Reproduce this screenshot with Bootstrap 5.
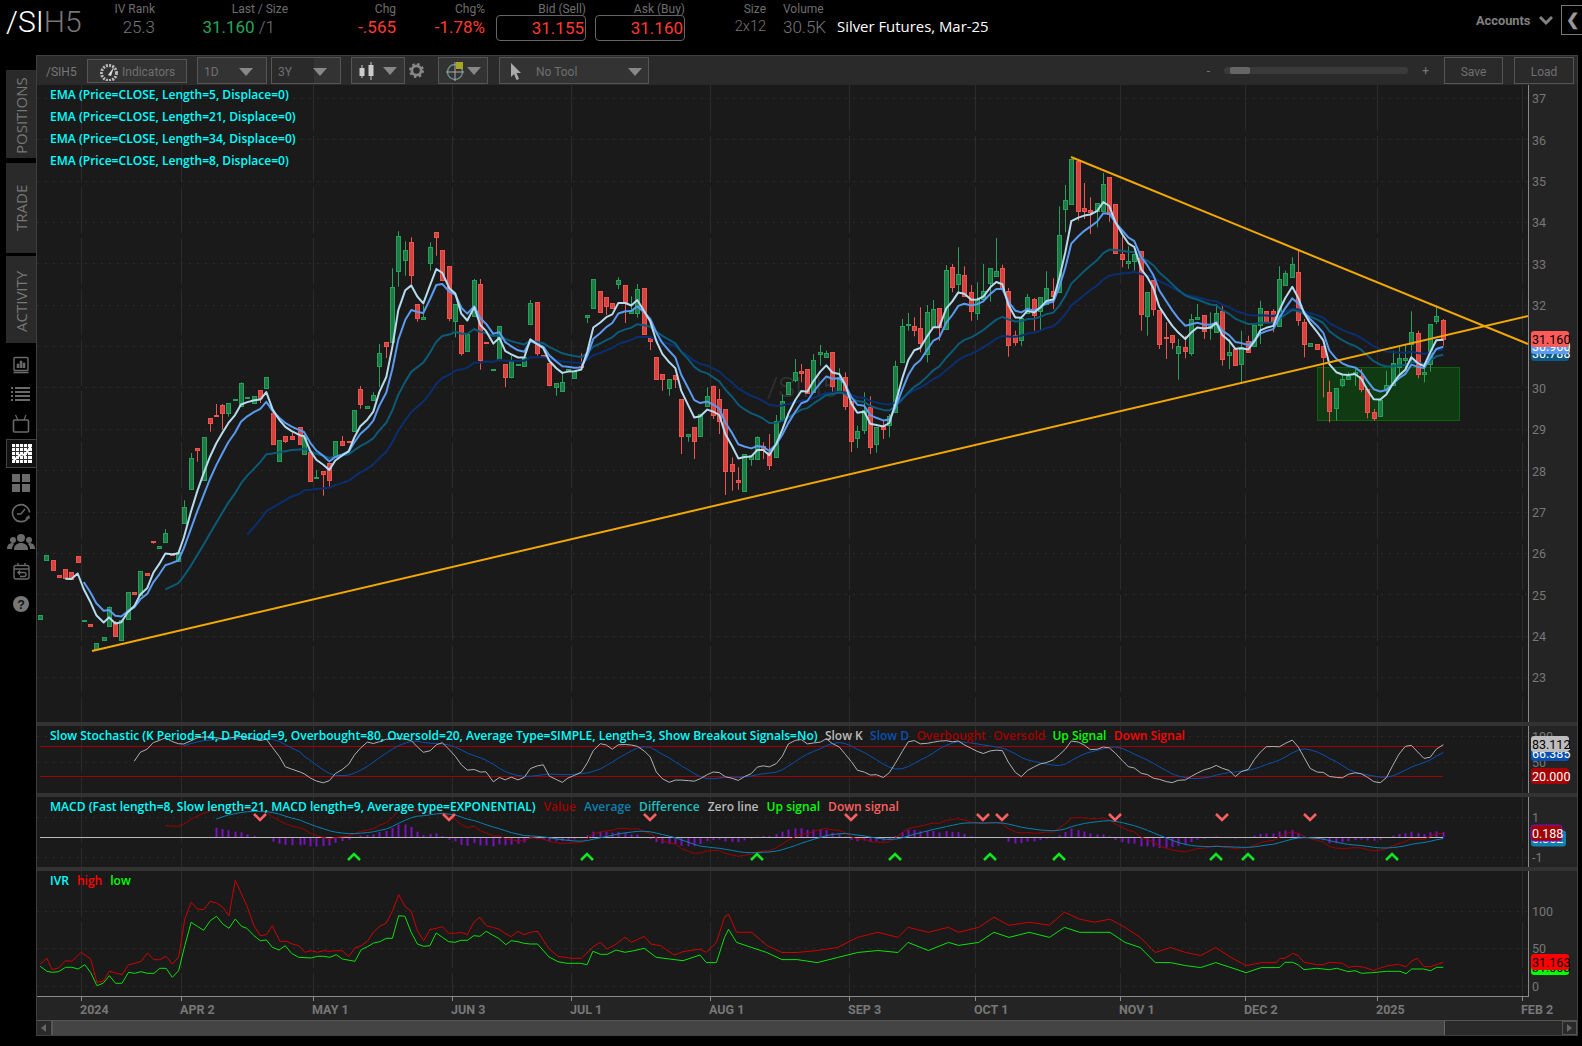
<!doctype html>
<html lang="en">
<head>
<meta charset="utf-8">
<title>/SIH5 chart</title>
<link href="https://cdn.jsdelivr.net/npm/bootstrap@5.3.0/dist/css/bootstrap.min.css" rel="stylesheet">
<style>
html,body{height:1046px;overflow:hidden;background:#000;}
body{font-family:Roboto,"Liberation Sans",sans-serif;color:#777;font-size:12px;}
.hdr{height:55px;padding:3px 0 0 6px;}
.sym{width:84px;font-size:30px;font-weight:300;line-height:38px;color:#777;}
.sym b{font-weight:300;color:#fff;}
.qc{display:flex;flex-direction:column;text-align:right;flex:none;}
.ql{font-size:12px;line-height:12px;color:#6e6e6e;}
.qv{font-size:17px;font-weight:300;line-height:24px;color:#777;}
.qv.nar{font-size:14.5px;}
.qbox{border:1px solid #666;border-radius:4px;margin-left:auto;padding-right:1px;width:90px;color:#ff3b30;font-weight:400;}
.c-iv{width:65px}.c-last{width:133px}.c-chg{width:108px}.c-pct{width:89px}.c-bid{width:101px}.c-ask{width:99px}.c-sz{width:81px}.c-vol{width:47px;margin-left:17px;text-align:left}
.red{color:#ff3b30;font-weight:400}.grn{color:#22a858;font-weight:400}
.pr-s{padding-right:13px;}
.desc{font-family:"Open Sans",sans-serif;font-size:14.9px;color:#fff;margin:11px 0 0 7px;line-height:24px;}
.acct{margin-left:auto;margin-right:-4px;margin-top:10px;font-weight:700;font-size:12.8px;color:#808080;line-height:16px;width:89px;}
.acct svg{margin-left:9px;vertical-align:-1px;}
.coll{width:21px;height:30px;margin-top:2px;border:1px solid #777;border-right:0;color:#999;font-weight:700;line-height:27px;padding-left:4px;font-size:16px;}
.work{height:981px;}
.rail{width:36px;flex:none;padding:15px 0 0 6px;}
.rtab{writing-mode:vertical-rl;transform:rotate(180deg);background:#2a2a2a;color:#777;font-family:"Open Sans",sans-serif;font-size:15px;text-align:center;width:30px;line-height:30px;box-sizing:border-box;padding-bottom:4px;}
.rt1{height:88px;margin-bottom:5px}.rt2{height:90px;margin-bottom:3px;padding-bottom:0}.rt3{height:87px;margin-bottom:7px}
.ric{height:29.6px;width:30px;display:flex;align-items:center;justify-content:center;}
.ric.act{border:1px solid #444;border-right:0;background:#111;}
.ric.last{margin-top:2px;}
.panel{width:1542px;flex:none;border:1px solid #3f3f3f;background:#1a1a1a;}
.tbar{height:30px;background:#2a2a2a;align-items:center;}
.tsym{width:50px;padding:2px 0 0 9px;color:#777;}
.tbtn{height:27px;border:1px solid #555;background:#333;color:#6f6f6f;display:flex;align-items:center;flex:none;padding-top:2px;}
.t-ind{width:100px;height:24px;padding-left:11px;}
.t-ind svg{margin-right:3px;}
.t-1d{width:70px;margin-left:10px;padding:2px 13px 0 6px;justify-content:space-between;}
.t-3y{width:70px;margin-left:4px;padding:2px 13px 0 6px;justify-content:space-between;background:linear-gradient(90deg,#2a2a2a 42px,#333 42px);}
.t-cd{width:54px;margin-left:10px;padding:0 7px 0 6px;justify-content:space-between;}
.t-gr{width:50px;margin-left:11px;padding:0 6px 0 6px;justify-content:space-between;}
.t-no{width:150px;margin-left:11px;padding:2px 6px 0 10px;}
.t-no span{margin:0 auto 0 14px;}
.tri{width:0;height:0;border:7px solid transparent;border-top:8px solid #888;border-bottom:0;flex:none;}
.tgear{width:22px;display:flex;flex:none;justify-content:center;}
.zm{margin-left:auto;color:#777;}
.slid{width:184px;height:7px;background:#3a3a3a;border-radius:4px;margin:0 14px;padding-left:6px;}
.slid i{display:block;width:20px;height:7px;background:#666;border-radius:2px;}
.t-sv{width:59px;margin-left:15px;justify-content:center;background:#2a2a2a;}
.t-ld{width:60px;margin:0 3px 0 11px;justify-content:center;background:#2a2a2a;}
.pane{position:relative;}
.pane svg{display:block;}
.divd{height:4px;background:#333;}
.lg{position:absolute;left:13px;top:2px;font-family:"Open Sans",sans-serif;font-size:12.05px;font-weight:600;line-height:16px;white-space:nowrap;color:#0ff;}
.lg span{margin-left:8px;}
.lg.l2{top:24px}.lg.l3{top:46px}.lg.l4{top:68px}
.lg.lsto{letter-spacing:-.03px;}
.lg.lsto span{margin-left:7.4px;}
.c-k{color:#bbb}.c-d{color:#0a50b0}.c-o{color:#a00000}.c-u{color:#0f0}.c-n{color:#f00}.c-a{color:#0a80b0}.c-f{color:#20c0c0}.c-s{color:#ff6060}
.sbar{height:15px;background:#2a2a2a;border-top:1px solid #555;}
.sb-l{width:16px;border-right:2px solid #555;color:#777;}
.sb-t{width:1392px;background:#444;border-right:1px solid #666;}
.sb-r{width:15px;margin-left:auto;border:1px solid #555;}
.sb-l,.sb-r{display:flex;align-items:center;justify-content:center;}
.qtx{fill:#777;font-family:Roboto,sans-serif;font-size:12.5px;}
</style>
</head>
<body>
<header class="hdr d-flex align-items-start">
  <div class="sym"><b>/SI</b><span>H5</span></div>
  <div class="qc c-iv"><div class="ql">IV Rank</div><div class="qv">25.3</div></div>
  <div class="qc c-last"><div class="ql">Last / Size</div><div class="qv pr-s"><span class="grn">31.160</span> /1</div></div>
  <div class="qc c-chg"><div class="ql">Chg</div><div class="qv red">-.565</div></div>
  <div class="qc c-pct"><div class="ql">Chg%</div><div class="qv red">-1.78%</div></div>
  <div class="qc c-bid"><div class="ql">Bid (Sell)</div><div class="qv qbox">31.155</div></div>
  <div class="qc c-ask"><div class="ql">Ask (Buy)</div><div class="qv qbox">31.160</div></div>
  <div class="qc c-sz"><div class="ql">Size</div><div class="qv nar">2x12</div></div>
  <div class="qc c-vol"><div class="ql">Volume</div><div class="qv">30.5K</div></div>
  <div class="desc">Silver Futures, Mar-25</div>
  <div class="acct">Accounts<svg width="14" height="10" viewBox="0 0 14 10"><path d="M1 1l6 6 6-6" fill="none" stroke="#808080" stroke-width="3"/></svg></div>
  <div class="coll">&#10094;</div>
</header>
<div class="work d-flex">
  <nav class="rail">
    <div class="rtab rt1">POSITIONS</div>
    <div class="rtab rt2">TRADE</div>
    <div class="rtab rt3">ACTIVITY</div>
    <div class="ric"><svg width="18" height="18" viewBox="0 0 18 18" fill="none" stroke="#6a6a6a"><rect x="2" y="1.5" width="14" height="13" rx="1" stroke-width="1.4"/><path d="M1.5 16.5h15" stroke-width="1.6"/><path d="M5 12V8h2v4M8 12V5h2v7M11 12V7h2v5" fill="#6a6a6a" stroke-width=".6"/></svg></div>
    <div class="ric"><svg width="20" height="16" viewBox="0 0 20 16" stroke="#6a6a6a" stroke-width="2"><path d="M0 2h2M4 2h15M0 6h2M4 6h15M0 10h2M4 10h15M0 14h2M4 14h15"/></svg></div>
    <div class="ric"><svg width="18" height="19" viewBox="0 0 18 19" fill="none" stroke="#6a6a6a" stroke-width="1.6"><rect x="1.5" y="6" width="15" height="12" rx="1"/><path d="M6 6L3.5 1M12 6l2-5" stroke-width="1.2"/></svg></div>
    <div class="ric act"><svg width="20" height="19" viewBox="0 0 20 19"><rect width="20" height="19" fill="#fff"/><path d="M3.5 0v19M7.5 0v19M11.5 0v19M15.5 0v19M0 3.5h20M0 7.5h20M0 11.5h20M0 15.5h20" stroke="#333" stroke-width="1"/><path d="M1 17L9 10l4 1 6-9" stroke="#fff" stroke-width="2" fill="none"/></svg></div>
    <div class="ric"><svg width="18" height="18" viewBox="0 0 18 18" fill="#6a6a6a"><rect width="8" height="8"/><rect x="10" width="8" height="8"/><rect y="10" width="8" height="8"/><rect x="10" y="10" width="8" height="8"/></svg></div>
    <div class="ric"><svg width="20" height="20" viewBox="0 0 20 20" fill="none" stroke="#6a6a6a" stroke-width="1.6"><path d="M17 15A8.5 8.5 0 1 1 18.5 9.5"/><path d="M10 11l4-5M10 11H6" stroke-width="1.4"/><path d="M14 15.500h5l-1-3.500z" fill="#6a6a6a" stroke="none"/></svg></div>
    <div class="ric"><svg width="28" height="16" viewBox="0 0 28 16" fill="#6a6a6a"><circle cx="14" cy="4" r="4"/><path d="M7 16c0-5 3-7 7-7s7 2 7 7z"/><circle cx="6" cy="6" r="3"/><path d="M0 15c0-4 2-6 6-6l1 1c-1 1-2 3-2 5z"/><circle cx="22" cy="6" r="3"/><path d="M28 15c0-4-2-6-6-6l-1 1c1 1 2 3 2 5z"/></svg></div>
    <div class="ric"><svg width="17" height="17" viewBox="0 0 17 17" fill="none" stroke="#6a6a6a" stroke-width="1.4"><rect x="1" y="2.500" width="15" height="13.500" rx="2"/><path d="M1 6h15M5 0v3M12 0v3"/><path d="M5 9.500h6a2 2 0 0 1 0 4H7M7 7.500l-2 2 2 2"/></svg></div>
    <div class="ric last"><svg width="16" height="16" viewBox="0 0 16 16"><circle cx="8" cy="8" r="8" fill="#777"/><text x="8" y="12.500" text-anchor="middle" font-family="Liberation Sans,sans-serif" font-size="12.500" font-weight="700" fill="#111">?</text></svg></div>
  </nav>
  <main class="panel d-flex flex-column">
    <div class="tbar d-flex">
      <div class="tsym">/SIH5</div>
      <div class="tbtn t-ind"><svg width="20" height="18" viewBox="0 0 20 18"><circle cx="10" cy="10" r="7.500" fill="none" stroke="#bbb" stroke-width="3" stroke-dasharray="2 1.200"/><path d="M9 12L15 4l-3 9z" fill="#ddd"/></svg>Indicators</div>
      <div class="tbtn t-1d"><span>1D</span><i class="tri"></i></div>
      <div class="tbtn t-3y"><span>3Y</span><i class="tri"></i></div>
      <div class="tbtn t-cd"><svg width="18" height="18" viewBox="0 0 18 18"><path d="M4 3v13M13 0v18" stroke="#ccc"/><rect x="1.500" y="6" width="5" height="8" fill="#ccc"/><rect x="10.500" y="3" width="5" height="11" fill="#ccc"/></svg><i class="tri"></i></div>
      <div class="tgear"><svg width="15" height="15" viewBox="0 0 16 16"><circle cx="8" cy="8" r="5" fill="none" stroke="#888" stroke-width="3"/><circle cx="8" cy="8" r="6.800" fill="none" stroke="#888" stroke-width="2.400" stroke-dasharray="2.500 2.840"/></svg></div>
      <div class="tbtn t-gr"><svg width="20" height="20" viewBox="0 0 20 20"><circle cx="10" cy="11" r="7.500" fill="none" stroke="#6a8a8a" stroke-width="1.500"/><path d="M10 1v19M1 11h18" stroke="#aaa"/><rect x="11" y="1" width="7" height="7" fill="#a8a820"/></svg><i class="tri"></i></div>
      <div class="tbtn t-no"><svg width="12" height="17" viewBox="0 0 12 17"><path d="M1 0l10 10H6.500l2.500 6-2.500 1-2.500-6L1 14z" fill="#aaa"/></svg><span>No Tool</span><i class="tri"></i></div>
      <div class="zm">-</div>
      <div class="slid"><i></i></div>
      <div>+</div>
      <div class="tbtn t-sv">Save</div>
      <div class="tbtn t-ld">Load</div>
    </div>
    <div class="pane" id="pMain">
      <div class="lg">EMA (Price=CLOSE, Length=5, Displace=0)</div>
      <div class="lg l2">EMA (Price=CLOSE, Length=21, Displace=0)</div>
      <div class="lg l3">EMA (Price=CLOSE, Length=34, Displace=0)</div>
      <div class="lg l4">EMA (Price=CLOSE, Length=8, Displace=0)</div>
    </div>
    <div class="divd"></div>
    <div class="pane" id="pSto">
      <div class="lg lsto">Slow Stochastic (K Period=14, D Period=9, Overbought=80, Oversold=20, Average Type=SIMPLE, Length=3, Show Breakout Signals=No)<span class="c-k">Slow K</span><span class="c-d">Slow D</span><span class="c-o">Overbought</span><span class="c-o">Oversold</span><span class="c-u">Up Signal</span><span class="c-n">Down Signal</span></div>
    </div>
    <div class="divd"></div>
    <div class="pane" id="pMac">
      <div class="lg">MACD (Fast length=8, Slow length=21, MACD length=9, Average type=EXPONENTIAL)<span class="c-o">Value</span><span class="c-a">Average</span><span class="c-f">Difference</span><span class="c-k">Zero line</span><span class="c-u">Up signal</span><span class="c-s">Down signal</span></div>
    </div>
    <div class="divd"></div>
    <div class="pane" id="pIvr">
      <div class="lg">IVR<span class="c-n">high</span><span class="c-u">low</span></div>
    </div>
    <div class="pane" id="pTime"></div>
    <div class="sbar d-flex">
      <div class="sb-l"><svg width="6" height="8" viewBox="0 0 6 8"><path d="M5 0v8L0 4z" fill="#666"/></svg></div>
      <div class="sb-t"></div>
      <div class="sb-r"><svg width="6" height="8" viewBox="0 0 6 8"><path d="M0 0v8l5-4z" fill="#666"/></svg></div>
    </div>
  </main>
</div>
<script>
(function(){
var segs=[
[36,530,"13g258,270 31g78,92 50r93,122 69r138,143 88r120,146 106r130,150 125r82,101 143g273,275 162r285,290 181g343,360 203g324,332 219g235,293,232 238r278,320,276,323 256g272,332 275g190,272 295r189,194 313g127,200 334r132,137 352r37,41,37,44 370g51,56 388g12,38,0 407r76,80"],
[0,340,"535g638,665 551g505,553,484 573g358,452,342 592r328,334,328,368 611g295,425 630r238,254,238,278 649r229,233,195 667r198,221,195,272 685g193,224,193,233 705g180,182 723g133,201,130 742g175,177 763g172,194 781r154,178,154,192 799g114,146 818r223,317 838g304,368 856r292,306,292,312 875r292,302,280"],
[300,225,"1r610,660 12g640,692 31r684,770 49g760,762,738 70r742,752,742,815 88r718,770,718,788 106g652,700 127r652,665,636 146r652,656 163g558,620 181r496,540,486,554 202g547,553 220g514,530,505 238g388,428,360,490 259r355,368,355,402 277g190,355,133 295g37,143,22,188 316g79,109,52,155 334r55,155,40,180 352r241,284,241,293 370g280,286,245 391g70,119,55,140 409r25,41,25,95 427r79,170 448r127,284,127,292 466g241,292,241,340 484r304,389,304,395 502g331,383 523g169,278,165 541r181,410,165,437 558r354,356 580g435,439 598g307,405,307,412 616r421,461,421,490 634g410,458,395,463 654g420,422 673g400,428 691g238,301,228 712r235,389,235,395 730r394,397 748r418,485,418,487 769g478,491,478,515 787g475,503,445"],
[565,270,"9g300,307 28g305,326 49r290,292,253 67g139,146,139,162 85g31,119 106r67,131 124r85,113,85,138 142r103,119 160g34,47,25,60 181r49,102,49,162 199g124,134,82 217g61,134,45,146 238r58,197 256r205,218,205,243 274r265,332 292r316,331,316,365 313g331,359,331,380 331r319,332,319,357 349r391,503,391,555 370g496,503,496,518 388r475,518,475,570 406g434,500 427g382,413,355 445r352,440,350,450 463r391,458,360,495 481r421,608,421,678 502r586,608,565,665 520r634,640,595,662 538g556,668 559g558,570,558,590 577g505,571,502 595r532,542,520,570 613r550,590,495,603 634g455,562,438 652g397,455,377 670g340,377 691g310,334,270,340 709r306,312,285,340 727r301,373 745g274,370,255 766g250,257,228,290 784g252,263,245"],
[830,225,"7r385,488,385,505 28g458,497,433 46r460,548,445,558 64r530,650,530,684 82g622,644,605,672 103g557,617,505,630 121r550,671,517,690 139g610,662,610,686 160r604,616,590,645 178g577,605,570,640 196g427,565,410 217g307,416,285 235g300,304,267,320 253r307,320,280,337 271r313,358,250,385 292g265,392,243,415 310g256,310,228 328r253,310,253,350 349g139,317,123 367r130,191,120,205 385g151,180,70,205 403r154,217,127 424r205,263,183,290 442g225,267,175,288 460g202,226,120 481g133,179,133,233 499g142,158,42 517r133,195,122 535r202,365,192,398 556r334,356,320,365 574g283,350,283,365 592g220,268,210 613r226,275,222,320 631g220,262,220,318 649g193,240,142 670r202,218,163,255"],
[1000,150,"178g258,428,172 196g154,182,108,250 214g30,166 235r35,185,35,215 253r178,188,102,210 271r184,190,145,255 292g163,188,163,235 310g106,188,72 328r85,195,85,218 346r166,314 367r316,330,255,355 385g337,344,292,360 403g316,338,316,365 424r307,496,307,545 442g430,502,430,560 460r394,482,394,500 478r484,586,484,600 499r565,569,520,630 517r559,581,559,600 535g592,613,570,692 556r595,608,560,628 574g511,614,495,620 592g505,510,465 613r499,546,499,570 631g530,536,490,572 649g493,550,465 667r487,632,470,650 688g610,620,570,660 706r600,647,600,650 724g595,647,545,705 745r575,608,560 763g529,593 781g478,530,455,585 799r487,521 820r487,519,480,550 838g391,532,352 856g373,410,365 877g346,385,325 895r370,515,302,530 913r520,587,510,625"],
[1280,280,"91g192,200 112r196,212 130r200,233,200,355 148r340,398,305,430 169g328,388,328,425 187g300,317,285,325 205g290,298,280 225g280,285,270,320 244r290,328,270,340 262r330,398,330,418 281r400,418,390,425 301g362,410 319g317,330,275,345 338g252,318,215 357g238,265,200,290 376g238,244,198,270 394g160,197,97,250 413r163,287,155,298 432g280,287,250,310 451g136,257,136,278 469g112,128,80,135 490r124,180,120,200"]
];
var C=[];
segs.forEach(function(s){
  s[2].split(" ").forEach(function(e){
    var m=e.match(/^(\d+)([gr])(.*)$/),v=m[3].split(",").map(Number);
    var t=s[1]+v[0]/3,b=s[1]+v[1]/3;
    C.push({x:s[0]+(+m[1])/3,d:m[2],t:t,b:b,h:v[2]!==undefined?s[1]+v[2]/3:t,l:v[3]!==undefined?s[1]+v[3]/3:b});
  });
});
C.sort(function(a,b){return a.x-b.x});
var price=function(y){return 37-(y-99)/41.35};
var close=C.map(function(c){return c.d=="g"?c.t:c.b});
function ema(a,n){
  var out=[],k=2/(n+1),s=0,c=0,v=null;
  for(var i=0;i<a.length;i++){
    if(a[i]===null){out.push(null);continue}
    if(v===null){s+=a[i];c++;if(c==n){v=s/n;out.push(v)}else out.push(null)}
    else{v=a[i]*k+v*(1-k);out.push(v)}
  }
  return out;
}
function sma(a,n){
  return a.map(function(v,i){
    if(i<n-1)return null;var s=0;
    for(var j=i-n+1;j<=i;j++){if(a[j]===null)return null;s+=a[j]}
    return s/n;
  });
}
function pts(a,fy){
  var r=[];a.forEach(function(v,i){if(v!==null)r.push(C[i].x.toFixed(1)+","+(fy?fy(v):v).toFixed(1))});
  return r.join(" ");
}
function L(p,col,w){return '<polyline points="'+p+'" fill="none" stroke="'+col+'" stroke-width="'+w+'" stroke-linejoin="round"/>'}
var ticks=[81,181,313,452,571,710,849,975,1120,1245,1377,1522];
function grid(y1,y2,hs){
  var o='<rect x="37" y="'+y1+'" width="1491" height="'+(y2-y1)+'" fill="#1a1a1a"/>'+
        '<rect x="1529" y="'+y1+'" width="48" height="'+(y2-y1)+'" fill="#242424"/>';
  ticks.forEach(function(x){o+='<line x1="'+(x+.5)+'" x2="'+(x+.5)+'" y1="'+y1+'" y2="'+y2+'" stroke="#2b2b2b" stroke-dasharray="46 5"/>'});
  hs.forEach(function(y){o+='<line x1="37" x2="1528" y1="'+(y+.5)+'" y2="'+(y+.5)+'" stroke="#2c2c2c" stroke-dasharray="2 6"/>'});
  o+='<line x1="1528.5" x2="1528.5" y1="'+y1+'" y2="'+y2+'" stroke="#8a8a8a"/>';
  return o;
}
function axT(y,t){return '<text class="qtx" x="1532" y="'+(y+5.4)+'">'+t+'</text>'}
function pill(y,t,bg,fg,w,bd){
  w=w||38;
  return '<rect x="1531" y="'+(y-8)+'" width="'+w+'" height="16" rx="3" fill="'+bg+'"'+(bd?' stroke="'+bd+'"':'')+'/>'+
   '<text x="1532" y="'+(y+4.5)+'" font-family="Roboto,sans-serif" font-size="12.5" fill="'+fg+'">'+t+'</text>';
}
function svg(id,y1,y2,inner){
  var h=y2-y1,el=document.getElementById(id);
  el.insertAdjacentHTML("afterbegin",'<svg width="1540" height="'+h+'" viewBox="37 '+y1+' 1540 '+h+'">'+inner+'</svg>');
}
/* main pane */
var m='',hs=[],yp=function(p){return 99+(37-p)*41.35};
for(var p=23;p<=37;p++)hs.push(Math.round(yp(p)));
m+=grid(86,723,hs);
for(p=23;p<=37;p++)m+=axT(yp(p),p);
m+='<text x="767" y="398" font-family="Roboto,sans-serif" font-size="28" font-weight="300" fill="#333">/SIH5</text>';
m+='<rect x="1317.500" y="368.500" width="142" height="53" fill="#0f3a12" stroke="#0b610e"/>';
C.forEach(function(c){
  var col=c.d=="g"?"#27a05c":"#ee5550",fill=c.d=="g"?"#1c7a45":"#d8423e";
  var x=Math.round(c.x);
  m+='<line x1="'+(x+.5)+'" x2="'+(x+.5)+'" y1="'+c.h.toFixed(1)+'" y2="'+c.l.toFixed(1)+'" stroke="'+col+'"/>';
  var tt=Math.round(c.t),hh=Math.max(1,Math.round(c.b-c.t));
  m+='<rect x="'+(x-1.5)+'" y="'+(tt+.5)+'" width="4" height="'+hh+'" fill="'+fill+'" stroke="'+col+'"/>';
});
m+=L(pts(ema(close,34)),"#0a2f70",2)+L(pts(ema(close,21)),"#0b5a78",2)+L(pts(ema(close,8)),"#5a9bf0",2)+L(pts(ema(close,5)),"#b6dcee",2);
m+='<line x1="92" y1="652" x2="1528" y2="317" stroke="#f5a800" stroke-width="2"/>';
m+='<line x1="1071" y1="158" x2="1528" y2="345" stroke="#f5a800" stroke-width="2"/>';
m+=pill(354,"30.788","#0a5a82","#fff")+pill(347,"30.960","#5a9bf0","#fff")+pill(340,"31.160","#ff5a5a","#000");
svg("pMain",86,723,m);
/* stochastic */
var K14=C.map(function(c,i){
  if(i<13)return null;var hi=1e9,lo=-1e9;
  for(var j=i-13;j<=i;j++){hi=Math.min(hi,C[j].h);lo=Math.max(lo,C[j].l)}
  return lo==hi?50:100*(lo-close[i])/(lo-hi);
});
var K=sma(K14,3),D=sma(K,9);
var ys=function(v){return 777.3-(v-20)*.5};
var s=grid(727,794,[737,763]);
s+=axT(737,100)+axT(763,50);
s+='<line x1="40" x2="1443" y1="747.500" y2="747.500" stroke="#a00000"/><line x1="40" x2="1443" y1="777.500" y2="777.500" stroke="#a00000"/>';
s+=L(pts(D,ys),"#0a50b0",1)+L(pts(K,ys),"#b0b0b0",1);
s+=pill(777,"20.000","#a80000","#fff")+pill(754,"66.385","#0a50b0","#fff")+pill(745,"83.112","#bdbdbd","#000");
svg("pSto",727,794,s);
/* macd */
var pr=close.map(price),e8=ema(pr,8),e21=ema(pr,21);
var val=pr.map(function(v,i){return e21[i]===null?null:e8[i]-e21[i]});
var avg=ema(val,9),ym=function(v){return 838.3-v*20};
var a=grid(798,868,[818,858]);
a+=axT(818,1)+axT(858,-1);
val.forEach(function(v,i){
  if(avg[i]===null)return;var d=(v-avg[i])*20;
  var x=Math.round(C[i].x);
  a+='<rect x="'+(x-.5)+'" y="'+(d>0?838.3-d:838.3).toFixed(1)+'" width="2" height="'+Math.abs(d).toFixed(1)+'" fill="#7a10c0"/>';
});
a+='<line x1="40" x2="1443" y1="838.500" y2="838.500" stroke="#b8b8b8"/>';
a+=L(pts(val,ym),"#a00000",1)+L(pts(avg,ym),"#0a80b0",1);
[260,449,650,851,983,1002,1115,1222,1310].forEach(function(x){a+='<path d="M'+(x-6)+' 815l6 6 6-6" fill="none" stroke="#ff6060" stroke-width="2.600"/>'});
[354,587,757,895,990,1059,1216,1248,1392].forEach(function(x){a+='<path d="M'+(x-6)+' 861l6-6 6 6" fill="none" stroke="#0fe81f" stroke-width="2.600"/>'});
a+=pill(839.5,"0.362","#1080b0","#fff",35)+pill(834,"0.188","#a00000","#fff",31,"#7a10c0");
svg("pMac",798,868,a);
/* ivr */
var hz="90,735 105,718 117,752 131,747 147,725 161,727 182,700 203,720 217,790 231,787 245,757 259,762 273,767 288,737 302,733 316,727 330,702 345,722 358,722 372,712 386,735 400,715 414,600 428,550 442,570 456,572 471,547 485,552 499,565 513,590 527,484 541,525 553,560 569,620 583,650 597,647 610,620 627,667 641,667 655,675 669,680 683,700 697,695 711,700 725,695 739,697 753,695 767,695 781,713 795,687 809,680 823,667 837,638 851,622 865,612 879,577 893,527 907,562 921,577 935,635 949,665 963,632 977,628 991,623 1005,643 1019,643 1033,640 1047,647 1061,610 1075,595 1089,620 1103,625 1117,630 1131,643 1145,653 1160,637 1174,647 1188,640 1204,637 1230,690 1250,712 1280,718 1302,718 1330,682 1345,670 1360,690 1380,675 1400,655 1415,670 1443,652 1458,675 1480,680 1510,708 1530,698 1568,690";
var gz="90,742 105,757 117,760 131,758 147,745 161,745 175,750 190,737 203,760 217,800 231,793 245,770 259,793 273,793 288,760 302,763 316,758 330,763 345,763 358,748 372,748 386,775 400,755 414,680 428,610 442,622 456,634 471,605 485,592 499,615 513,628 527,600 541,622 553,628 569,650 583,665 597,663 610,685 625,693 639,680 653,703 669,715 697,717 711,712 725,712 739,715 753,707 767,720 795,727 809,692 823,683 837,672 851,668 865,658 879,658 893,590 907,592 921,640 935,675 949,682 963,680 977,642 991,655 1005,668 1019,670 1033,664 1047,664 1061,650 1075,652 1089,637 1103,648 1117,658 1133,677 1145,665 1160,668 1174,673 1188,675 1204,675 1230,714 1250,728 1270,733 1300,733 1315,737 1328,697 1345,706 1360,706 1380,693 1400,700 1420,695 1443,688 1470,715 1500,720 1530,725 1568,708";
var hm="700,945 710,935 718,910 722,907 730,925 745,925 760,938 775,945 790,945 810,943 830,940 850,930 870,925 890,930 900,920 920,925 940,920 950,925 970,920 985,910 1000,918 1020,915 1040,918 1055,905 1070,912 1085,915 1100,912 1115,920 1130,930 1145,945 1160,940 1175,945 1190,948 1205,940 1220,950 1235,958 1250,955 1265,955";
var gm="700,955 710,955 718,930 722,922 730,935 745,940 760,945 775,952 790,952 810,955 830,950 850,945 870,943 890,945 900,935 920,943 940,935 950,938 970,935 985,925 1000,930 1020,925 1040,930 1055,920 1070,925 1085,925 1100,925 1115,935 1130,940 1145,955 1160,955 1175,958 1190,960 1205,955 1220,960 1235,965 1250,960 1265,960";
var he="0,718 15,718 38,703 55,710 72,730 110,737 130,737 148,730 188,733 205,745 225,742 250,744 280,754 320,741 355,736 378,743 395,726 412,718 432,743 452,743 475,735 490,730";
var ge="0,745 15,730 38,730 55,738 72,752 110,748 148,752 170,748 205,758 225,755 245,763 275,761 320,757 360,757 378,764 395,750 430,750 452,755 470,745 490,745";
function conv(z,m_,e){
  var o=[];
  z.split(" ").forEach(function(q){var v=q.split(",");o.push((v[0]/2.24).toFixed(1)+","+(720+v[1]/3).toFixed(1))});
  m_.split(" ").forEach(function(q){var v=q.split(",");o.push((v[0]*1.009).toFixed(1)+","+(v[1]*1.009).toFixed(1))});
  e.split(" ").forEach(function(q){var v=q.split(",");o.push((1280+v[0]/3).toFixed(1)+","+(720+v[1]/3).toFixed(1))});
  return o.join(" ");
}
var v=grid(872,997,[912,949,987]);
v+=axT(912,100)+axT(949,50)+axT(987,0);
v+=L(conv(gz,gm,ge),"#0be00b",1)+L(conv(hz,hm,he),"#d00000",1);
v+=pill(968,"31.063","#0f0","#000")+pill(963,"31.163","#f00","#000");
svg("pIvr",872,997,v);
/* time axis */
var T='<rect x="37" y="997" width="1540" height="24" fill="#242424"/><line x1="37" x2="1529" y1="997.500" y2="997.500" stroke="#8a8a8a"/>';
var labs=["2024","APR 2","MAY 1","JUN 3","JUL 1","AUG 1","SEP 3","OCT 1","NOV 1","DEC 2","2025","FEB 2"];
ticks.forEach(function(x,i){
  T+='<line x1="'+(x+.5)+'" x2="'+(x+.5)+'" y1="997" y2="1002" stroke="#8a8a8a"/>';
  T+='<text x="'+(x-1)+'" y="1015" font-family="Roboto,sans-serif" font-size="12.500" font-weight="700" fill="#777">'+labs[i]+'</text>';
});
svg("pTime",997,1021,T);
})();
</script>
<script src="https://cdn.jsdelivr.net/npm/bootstrap@5.3.0/dist/js/bootstrap.bundle.min.js"></script>
</body>
</html>
